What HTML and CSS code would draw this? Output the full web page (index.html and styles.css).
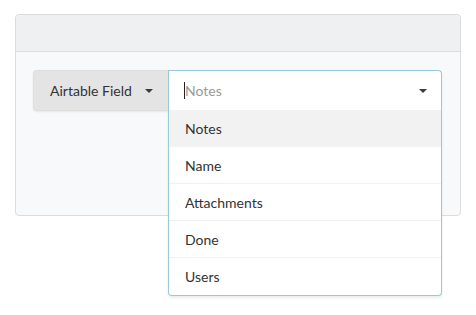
FILE: index.html
```
<!DOCTYPE html>
<html>
<head>
<meta charset="utf-8">
<link rel="stylesheet" href="styles.css">
</head>
<body>
<div class="card">
  <div class="card-header"></div>
  <div class="card-body">
    <div class="group">
      <div class="addon">
        <span>Airtable Field</span>
        <span class="caret"></span>
      </div>
      <div class="select">
        <div class="control">
          <span class="cursor"></span>
          <span class="placeholder">Notes</span>
          <span class="caret caret-right"></span>
        </div>
        <ul class="menu">
          <li class="item active">Notes</li>
          <li class="item">Name</li>
          <li class="item">Attachments</li>
          <li class="item">Done</li>
          <li class="item">Users</li>
        </ul>
      </div>
    </div>
  </div>
</div>
</body>
</html>
```
FILE: styles.css
```
* { box-sizing: border-box; }
html, body { margin: 0; padding: 0; background: #fff; }
html { min-height: 315px; }
body {
  font-family: Lato, "Open Sans", sans-serif;
  font-size: 14px;
  color: #333;
  padding: 14px 15px 0 15px;
  width: 476px;
  min-height: 315px;
}
.card {
  width: 446px;
  border: 1px solid #dcdcdc;
  border-radius: 4px;
  background: #f8f9fa;
}
.card-header {
  height: 37px;
  background: #eff0f2;
  border-bottom: 1px solid #dcdcdc;
  border-radius: 4px 4px 0 0;
}
.card-body {
  height: 163px;
  padding: 18px 18px 0 17px;
}
.group {
  display: flex;
  height: 41px;
  border-radius: 4px;
  box-shadow: 0 1px 2px rgba(0,0,0,0.08);
}
.addon {
  width: 135px;
  background: #e4e4e4;
  border: 1px solid #dedede;
  border-right: none;
  border-radius: 4px 0 0 4px;
  display: flex;
  align-items: center;
  padding-left: 16px;
  padding-bottom: 1px;
  gap: 13px;
  color: #333;
}
.caret {
  display: inline-block;
  width: 0;
  height: 0;
  border-left: 4px solid transparent;
  border-right: 4px solid transparent;
  border-top: 4px solid #3a3a3a;
  margin-top: 1px;
}
.select {
  position: relative;
  flex: 1;
}
.control {
  height: 41px;
  background: #fff;
  border: 1px solid #98cad9;
  border-bottom: none;
  border-radius: 0 4px 0 0;
  display: flex;
  align-items: center;
  padding-left: 15px;
  padding-right: 14px;
  padding-bottom: 1px;
}
.cursor {
  width: 1px;
  height: 17px;
  background: #222;
}
.placeholder {
  color: #9a9a9a;
  flex: 1;
}
.menu {
  position: absolute;
  left: 0;
  right: 0;
  top: 40px;
  margin: 0;
  padding: 0;
  list-style: none;
  background: #fff;
  border: 1px solid #98cad9;
  border-top: none;
  border-radius: 0 0 4px 4px;
  box-shadow: 0 2px 3px rgba(0,0,0,0.08);
  z-index: 2;
}
.item {
  height: 37px;
  line-height: 37px;
  padding-left: 16px;
  border-bottom: 1px solid #f1f1f1;
  color: #333;
}
.item:last-child { border-bottom: none; }
.item.active { background: #f2f2f2; }
```
